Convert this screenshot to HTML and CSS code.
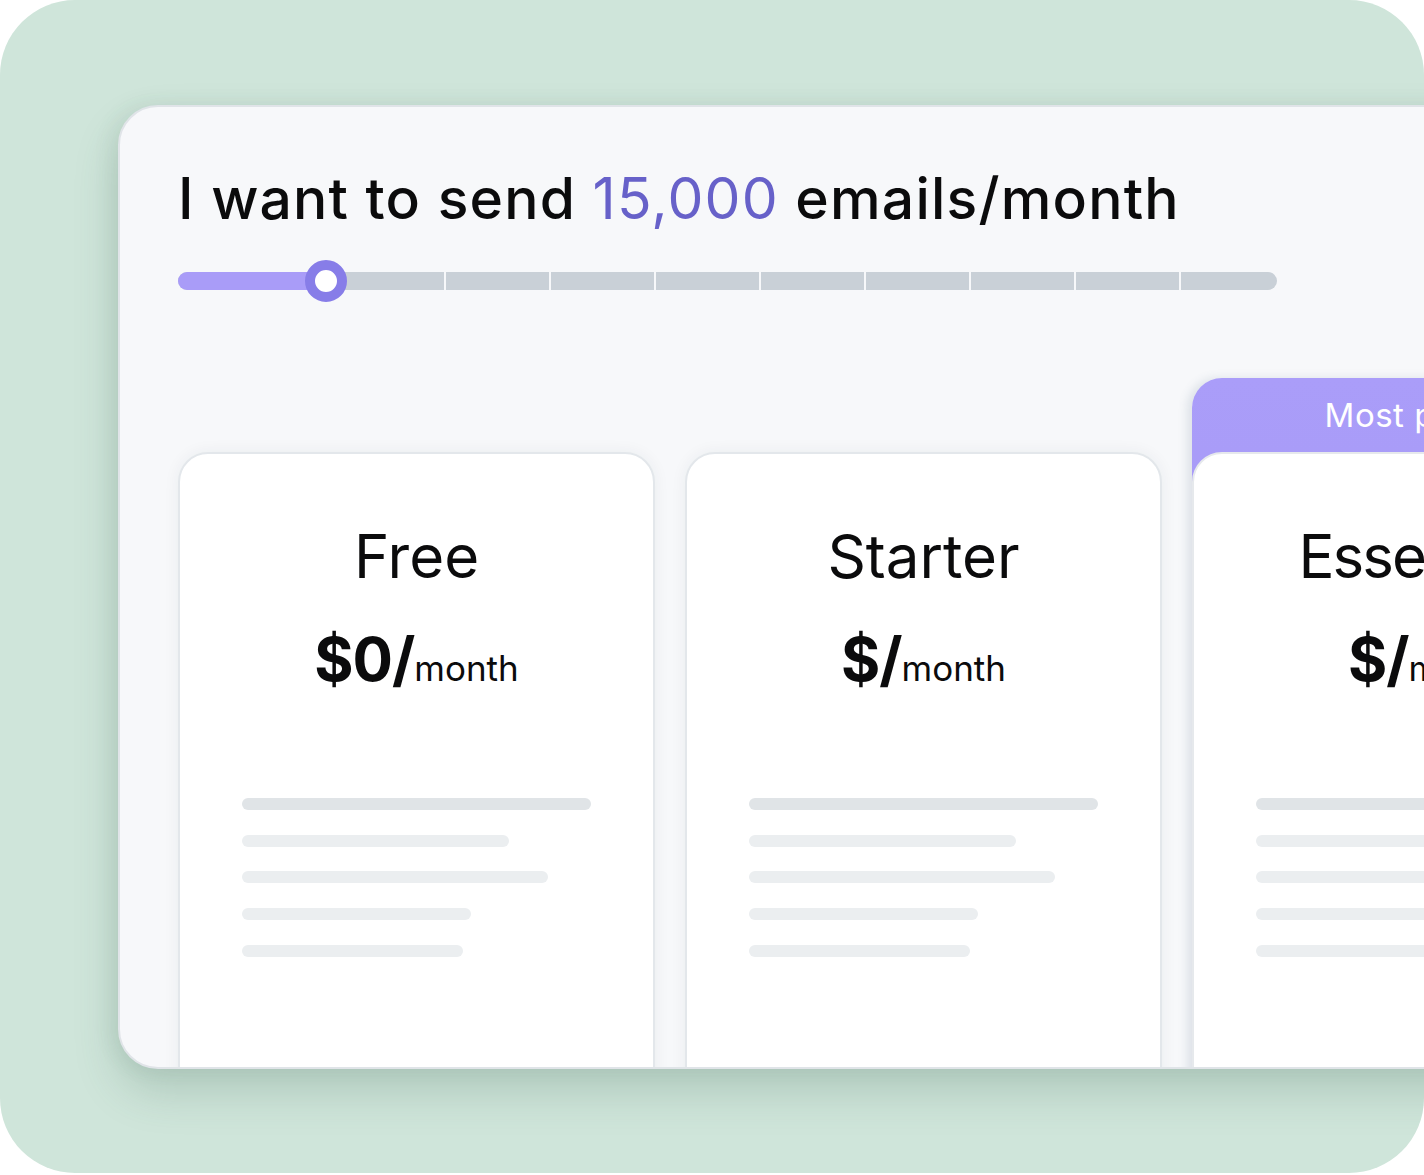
FILE: index.html
```html
<!DOCTYPE html>
<html lang="en">
<head>
  <meta charset="UTF-8">
  <title>Pricing</title>
  <link rel="stylesheet" href="styles.css">
</head>
<body>
  <div class="frame">
    <section class="panel">
      <h1 class="volume">I want to send <span class="count">15,000</span> emails/month</h1>

      <div class="slider">
        <div class="track">
          <span class="seg first"></span>
          <span class="seg"></span>
          <span class="seg"></span>
          <span class="seg"></span>
          <span class="seg"></span>
          <span class="seg"></span>
          <span class="seg"></span>
          <span class="seg"></span>
          <span class="seg"></span>
          <span class="seg"></span>
          <span class="seg last"></span>
        </div>
        <div class="fill"></div>
        <div class="thumb"></div>
      </div>

      <div class="plans">
        <article class="plan">
          <h2>Free</h2>
          <p class="price">$0/<small>month</small></p>
          <div class="lines">
            <span class="line dark" style="width: 349px"></span>
            <span class="line" style="width: 267px"></span>
            <span class="line" style="width: 306px"></span>
            <span class="line" style="width: 229px"></span>
            <span class="line" style="width: 221px"></span>
          </div>
        </article>

        <article class="plan">
          <h2>Starter</h2>
          <p class="price">$/<small>month</small></p>
          <div class="lines">
            <span class="line dark" style="width: 349px"></span>
            <span class="line" style="width: 267px"></span>
            <span class="line" style="width: 306px"></span>
            <span class="line" style="width: 229px"></span>
            <span class="line" style="width: 221px"></span>
          </div>
        </article>

        <div class="featured">
          <div class="badge">Most popular</div>
          <article class="plan">
            <h2 class="tight">Essentials</h2>
            <p class="price">$/<small>month</small></p>
            <div class="lines">
              <span class="line dark" style="width: 349px"></span>
              <span class="line" style="width: 267px"></span>
              <span class="line" style="width: 306px"></span>
              <span class="line" style="width: 229px"></span>
              <span class="line" style="width: 221px"></span>
            </div>
          </article>
        </div>
      </div>
    </section>
  </div>
</body>
</html>
```

FILE: styles.css
```css
body {
  margin: 0;
  background: #fff;
  font-family: Inter, "Open Sans", sans-serif;
  color: #0b0b0c;
}

.frame {
  height: 1173px;
  background: #cfe5da;
  border-radius: 75px;
  overflow: hidden;
  padding: 105px 0 0 118px;
  box-sizing: border-box;
}

.panel {
  width: 1600px;
  height: 964px;
  box-sizing: border-box;
  background: #f7f8fa;
  border: 2px solid #e0e4e8;
  border-radius: 40px;
  padding: 58px 0 0 58px;
  overflow: hidden;
  box-shadow: 0 22px 44px rgba(60, 100, 80, 0.22), -6px 0 20px rgba(60, 100, 80, 0.08);
}

.volume {
  margin: 0;
  font-size: 57px;
  line-height: 68px;
  font-weight: 500;
  letter-spacing: 1.2px;
}

.count {
  color: #6761c9;
  font-weight: 400;
}

/* slider */
.slider {
  position: relative;
  width: 1099px;
  height: 18px;
  margin-top: 39px;
}

.track {
  display: flex;
  gap: 2px;
  height: 18px;
}

.seg {
  width: 103px;
  background: #c9d0d7;
}

.seg.first {
  width: 56px;
  border-radius: 9px 0 0 9px;
}

.seg.last {
  width: 96px;
  border-radius: 0 9px 9px 0;
}

.fill {
  position: absolute;
  left: 0;
  top: 0;
  width: 140px;
  height: 18px;
  background: #a99cf8;
  border-radius: 9px 0 0 9px;
}

.thumb {
  position: absolute;
  left: 127px;
  top: -12px;
  width: 22px;
  height: 22px;
  border: 10px solid #877de8;
  border-radius: 50%;
  background: #fff;
}

/* plan cards */
.plans {
  display: flex;
  align-items: flex-start;
  gap: 30px;
  margin-top: 162px;
}

.plan {
  width: 477px;
  height: 760px;
  box-sizing: border-box;
  background: #fff;
  border: 2px solid #e3e7eb;
  border-radius: 30px;
  padding: 66px 0 0 62px;
  box-shadow: 0 0 16px rgba(30, 50, 70, 0.06);
}

.plan h2 {
  margin: 0 0 31px -62px;
  font-size: 60px;
  line-height: 72px;
  font-weight: 400;
  text-align: center;
}

.plan h2.tight {
  letter-spacing: -2px;
}

.price {
  margin: 0 0 0 -62px;
  font-size: 60px;
  line-height: 72px;
  font-weight: 700;
  letter-spacing: -1px;
  text-align: center;
}

.price small {
  font-size: 35px;
  font-weight: 400;
  letter-spacing: 0;
}

.lines {
  display: flex;
  flex-direction: column;
  gap: 24.7px;
  margin-top: 94px;
}

.line {
  height: 12px;
  border-radius: 6px;
  background: #ebeef0;
}

.line.dark {
  background: #e0e4e7;
}

.featured {
  margin-top: -74px;
  background: linear-gradient(#aa9df9, #9e92ef);
  border-radius: 30px 30px 0 0;
  box-shadow: -5px 0 10px rgba(70, 100, 130, 0.14);
}

.featured .plan {
  border-color: #e6e9ec;
  box-shadow: none;
}

.badge {
  height: 74px;
  line-height: 74px;
  text-align: center;
  color: #fff;
  font-size: 33px;
  letter-spacing: 0.5px;
}
```
